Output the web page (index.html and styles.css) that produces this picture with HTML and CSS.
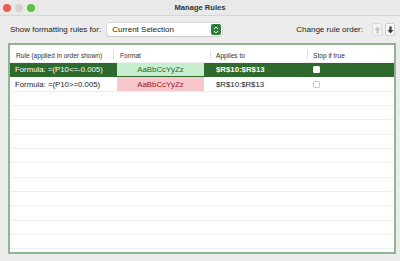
FILE: index.html
```html
<!DOCTYPE html>
<html>
<head>
<meta charset="utf-8">
<link rel="stylesheet" href="styles.css">
</head>
<body>
<div class="window">
  <div class="titlebar">
    <div class="lights">
      <span class="light red"></span>
      <span class="light gray"></span>
      <span class="light green"></span>
    </div>
    <div class="title">Manage Rules</div>
    <div></div>
  </div>
  <div class="toolbar">
    <div class="show">
      <span class="label">Show formatting rules for:</span>
      <div class="select">
        <span>Current Selection</span>
        <span class="stepper">
          <svg width="6" height="8" viewBox="0 0 6 8"><path d="M1 3 L3 1 L5 3 M1 5 L3 7 L5 5" fill="none" stroke="#fff" stroke-width="1"/></svg>
        </span>
      </div>
    </div>
    <div class="order">
      <span class="label">Change rule order:</span>
      <span class="obtn disabled">
        <svg width="7" height="8" viewBox="0 0 7 8"><path d="M3.5 0.5 L6.5 4 L4.6 4 L4.6 7.5 L2.4 7.5 L2.4 4 L0.5 4 Z" fill="#c4c4c4"/></svg>
      </span>
      <span class="obtn">
        <svg width="7" height="8" viewBox="0 0 7 8"><path d="M3.5 7.5 L6.5 4 L4.6 4 L4.6 0.5 L2.4 0.5 L2.4 4 L0.5 4 Z" fill="#3a3a3a"/></svg>
      </span>
    </div>
  </div>
  <div class="table">
    <div class="row head">
      <div class="c c1">Rule (applied in order shown)</div>
      <div class="c c2 sep">Format</div>
      <div class="c c3 sep">Applies to</div>
      <div class="c c4 sep">Stop if true</div>
    </div>
    <div class="row sel">
      <div class="c c1">Formula: =(P10&lt;=-0.005)</div>
      <div class="c c2"><span class="fmt good">AaBbCcYyZz</span></div>
      <div class="c c3 bold">$R$10:$R$13</div>
      <div class="c c4"><span class="cb on"></span></div>
    </div>
    <div class="row">
      <div class="c c1">Formula: =(P10&gt;=0.005)</div>
      <div class="c c2"><span class="fmt bad">AaBbCcYyZz</span></div>
      <div class="c c3">$R$10:$R$13</div>
      <div class="c c4"><span class="cb"></span></div>
    </div>
    <div class="row"></div>
    <div class="row"></div>
    <div class="row"></div>
    <div class="row"></div>
    <div class="row"></div>
    <div class="row"></div>
    <div class="row"></div>
    <div class="row"></div>
    <div class="row"></div>
    <div class="row"></div>
    <div class="row"></div>
  </div>
</div>
</body>
</html>
```

FILE: styles.css
```css
* { box-sizing: border-box; }
html, body {
  margin: 0;
  padding: 0;
  width: 400px;
  height: 261px;
  overflow: hidden;
  background: #ececec;
  font-family: "Liberation Sans", Arial, sans-serif;
  color: #222;
}
.window {
  width: 400px;
  height: 261px;
  display: flex;
  flex-direction: column;
}
.titlebar {
  height: 16px;
  display: grid;
  grid-template-columns: 1fr auto 1fr;
  align-items: center;
  background: #e9e9e9;
  border-bottom: 1px solid #d6d6d6;
}
.lights {
  display: flex;
  gap: 4px;
  padding-left: 3px;
}
.light {
  width: 8px;
  height: 8px;
  border-radius: 50%;
  display: block;
}
.light.red { background: #ee5a54; }
.light.gray { background: #d4d4d4; }
.light.green { background: #5cc13e; }
.title {
  font-size: 7.6px;
  font-weight: bold;
  color: #333;
}
.toolbar {
  height: 27px;
  display: flex;
  align-items: center;
  justify-content: space-between;
  padding: 0 5px 0 10px;
  font-size: 8px;
  color: #222;
}
.show, .order {
  display: flex;
  align-items: center;
}
.select {
  margin-left: 6px;
  width: 115px;
  height: 13px;
  background: #fff;
  border-radius: 3px;
  box-shadow: 0 0 0 0.5px #c8c8c8, 0 0.5px 1px rgba(0,0,0,0.15);
  display: flex;
  align-items: center;
  justify-content: space-between;
  padding: 0 1px 0 5px;
  font-size: 8px;
}
.stepper {
  width: 10px;
  height: 11px;
  background: #2e7d3c;
  border-radius: 2px;
  display: flex;
  align-items: center;
  justify-content: center;
}
.order .label { margin-right: 6px; }
.obtn {
  width: 10px;
  height: 13px;
  margin-left: 3px;
  background: #f6f6f6;
  border: 1px solid #d0d0d0;
  border-radius: 2px;
  display: flex;
  align-items: center;
  justify-content: center;
}
.obtn.disabled { background: #f3f3f3; border-color: #dcdcdc; }
.table {
  margin: 0 4px 0 8px;
  height: 211px;
  background: #fff;
  border: 2px solid #8fb690;
  display: flex;
  flex-direction: column;
  overflow: hidden;
}
.row {
  height: 14.35px;
  flex: none;
  display: flex;
  align-items: stretch;
  border-bottom: 1px solid #efefef;
  font-size: 7.8px;
}
.row.head {
  height: 18px;
  border-bottom: 1px solid #f1f1f1;
  font-size: 6.6px;
  color: #333;
}
.row.head .c { padding-top: 3px; }
.row.head .sep::before {
  content: "";
  position: absolute;
  left: 0;
  top: 5px;
  height: 9px;
  border-left: 1px solid #dedede;
}
.c {
  position: relative;
  display: flex;
  align-items: center;
  white-space: nowrap;
}
.c1 { width: 103px; padding-left: 6px; }
.c2 { width: 97px; padding-left: 7px; }
.c3 { width: 97px; padding-left: 6px; }
.c4 { flex: 1; padding-left: 6px; }
.row:not(.head) .c2 { padding: 0 6px 0 4px; }
.row:not(.head) .c1 { padding-left: 5px; }
.row.sel {
  background: #2e6a2e;
  color: #fff;
  border-bottom-color: #2e6a2e;
}
.bold { font-weight: bold; }
.fmt {
  flex: 1;
  align-self: stretch;
  display: flex;
  align-items: center;
  justify-content: center;
}
.fmt.good { background: #c7eecf; color: #1f6b2a; }
.fmt.bad { background: #f8c7ce; color: #9c1420; }
.cb {
  width: 7px;
  height: 7px;
  border-radius: 1.5px;
  border: 0.5px solid #c4c4c4;
  background: #fff;
  display: block;
}
.cb.on { border: none; }
```
